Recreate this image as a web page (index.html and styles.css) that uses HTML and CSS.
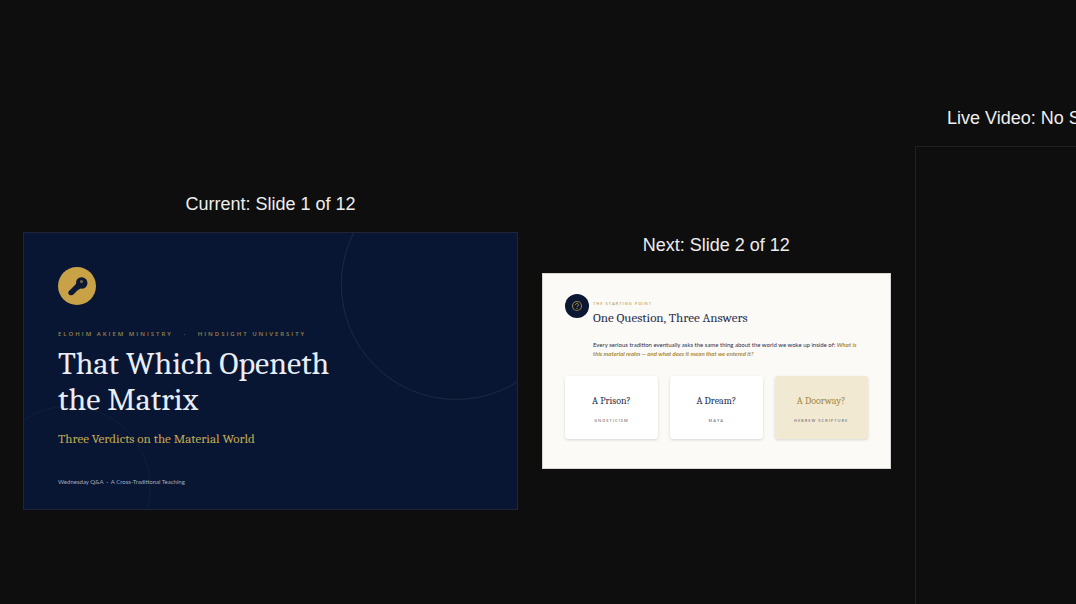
FILE: index.html
```html
<!DOCTYPE html>
<html lang="en">
<head>
  <meta charset="UTF-8" />
  <meta name="viewport" content="width=device-width, initial-scale=1.0"/>
  <title>Presenter View</title>
  <link rel="stylesheet" href="styles.css">
</head>
<body>

  <main class="stage">
    <section class="panel">
      <h2 class="caption">Current: Slide 1 of 12</h2>
      <article class="slide title-slide">
        <svg class="rings" viewBox="0 0 495 279" aria-hidden="true">
          <circle cx="435" cy="52" r="116" />
          <circle class="faint" cx="44" cy="257" r="82" />
        </svg>
        <svg class="key-badge" viewBox="0 0 38 38" aria-hidden="true">
          <circle cx="19" cy="19" r="19" fill="#c9a146" />
          <path d="M10.500 24.500l7.500-7.500a5.800 5.800 0 1 1 4.400 4.600l-3.400 2.200-3 3.200q-2 1.800-4.500 1-2-1.500-1-3.500z" fill="#0d1833" />
          <circle cx="23.500" cy="14.500" r="1.500" fill="#7c693c" />
        </svg>
        <p class="eyebrow">ELOHIM AKIEM MINISTRY &nbsp;&nbsp;·&nbsp;&nbsp; HINDSIGHT UNIVERSITY</p>
        <h1>That Which Openeth<br>the Matrix</h1>
        <p class="subtitle">Three Verdicts on the Material World</p>
        <p class="footnote">Wednesday Q&amp;A &nbsp;·&nbsp; A Cross-Traditional Teaching</p>
      </article>
    </section>

    <section class="panel">
      <h2 class="caption">Next: Slide 2 of 12</h2>
      <article class="slide question-slide">
        <header class="question-head">
          <svg class="question-badge" viewBox="0 0 24 24" aria-hidden="true">
            <circle cx="12" cy="12" r="12" fill="#0b1733" />
            <circle cx="12" cy="12" r="4.500" fill="none" stroke="#8f7c3c" stroke-width="1.200" />
            <path d="M10.500 11c0-2 3-2 3 0 0 1-1.500 1-1.500 2.200M12 14v1" fill="none" stroke="#a98f40" stroke-width="1" />
          </svg>
          <div>
            <p class="eyebrow">THE STARTING POINT</p>
            <h3>One Question, Three Answers</h3>
          </div>
        </header>
        <p class="lead">Every serious tradition eventually asks the same thing about the world we woke up inside of: <em>What is this material realm — and what does it mean that we entered it?</em></p>
        <div class="cards">
          <div class="card">
            <h4>A Prison?</h4>
            <p>GNOSTICISM</p>
          </div>
          <div class="card">
            <h4>A Dream?</h4>
            <p>MAYA</p>
          </div>
          <div class="card gold">
            <h4>A Doorway?</h4>
            <p>HEBREW SCRIPTURE</p>
          </div>
        </div>
      </article>
    </section>

    <section class="panel live">
      <h2 class="caption">Live Video: No Signal</h2>
      <div class="video"></div>
    </section>
  </main>

</body>
</html>
```
FILE: styles.css
```css
* {
  box-sizing: border-box;
}

body {
  margin: 0;
  background: #0e0e0e;
  color: #eee;
  font-family: "Liberation Sans", Arial, sans-serif;
  overflow: hidden;
}

h1, h2, h3, h4, p {
  margin: 0;
  font-weight: normal;
}

.stage {
  display: grid;
  grid-template-columns: 46vw 32.4vw 22vw;
  grid-template-rows: 100%;
  gap: 24px;
  align-items: center;
  height: 100vh;
  padding: 106px 0 8px 23px;
}

.panel {
  display: flex;
  flex-direction: column;
  gap: 16px;
}

.caption {
  font-size: 18px;
  line-height: 24px;
  text-align: center;
  white-space: nowrap;
}

.slide {
  aspect-ratio: 16 / 9;
  overflow: hidden;
  font-family: Lato, "Open Sans", sans-serif;
}

h1, h3, h4, .subtitle {
  font-family: Cambria, Caladea, "Noto Serif", "DejaVu Serif Condensed", "DejaVu Serif", serif;
}

.eyebrow, .card p {
  font-family: "Open Sans", sans-serif;
  font-weight: 600;
}

/* Title slide */
.title-slide {
  position: relative;
  z-index: 0;
  padding: 34px;
  background: #081633;
  border: 1px solid #202438;
  color: #e9edf5;
}

.rings {
  position: absolute;
  z-index: -1;
  inset: 0;
  width: 100%;
  height: 100%;
  fill: none;
  stroke: #1c2b42;
}

.rings .faint {
  stroke: #0f2038;
}

.key-badge {
  display: block;
  width: 38px;
  height: 38px;
}

.title-slide .eyebrow {
  margin-top: 24px;
  font-size: 6px;
  line-height: 10px;
  letter-spacing: 2px;
  color: #9a8449;
  white-space: nowrap;
}

.title-slide h1 {
  margin-top: 7px;
  font-size: 32px;
  line-height: 36px;
}

.subtitle {
  margin-top: 13px;
  font-size: 13px;
  line-height: 16px;
  color: #c3aa55;
}

.footnote {
  margin-top: 30px;
  font-size: 6px;
  line-height: 10px;
  color: #a4adbe;
}

/* Question slide */
.question-slide {
  padding: 20px 22px;
  background: #fcfaf6;
  border: 1px solid #d8d6d2;
  color: #283050;
}

.question-head {
  display: flex;
  gap: 4px;
}

.question-badge {
  width: 24px;
  height: 24px;
}

.question-slide .eyebrow {
  margin-top: 6px;
  font-size: 4px;
  line-height: 8px;
  letter-spacing: 1px;
  color: #b7a368;
}

.question-slide h3 {
  margin-top: 2px;
  font-size: 13px;
  line-height: 16px;
}

.lead {
  margin: 14px 6px 0 28px;
  font-size: 6px;
  line-height: 9px;
}

.lead em {
  font-weight: bold;
  color: #a98a3a;
}

.cards {
  display: grid;
  grid-template-columns: repeat(3, 1fr);
  gap: 12px;
  margin-top: 18px;
}

.card {
  padding: 17px 4px 14px;
  background: #fff;
  border-radius: 3px;
  box-shadow: 0 1px 3px #00000026;
  text-align: center;
}

.card h4 {
  font-size: 10px;
  line-height: 16px;
}

.card p {
  margin-top: 8px;
  font-size: 4px;
  line-height: 8px;
  letter-spacing: 1px;
  color: #777a88;
}

.card.gold {
  background: #f2e9d3;
}

.gold h4 {
  color: #a08a48;
}

/* Live video */
.live {
  height: calc(100% + 14px);
  align-self: start;
}

.video {
  flex: 1;
  border: 1px solid #212121;
}
```
